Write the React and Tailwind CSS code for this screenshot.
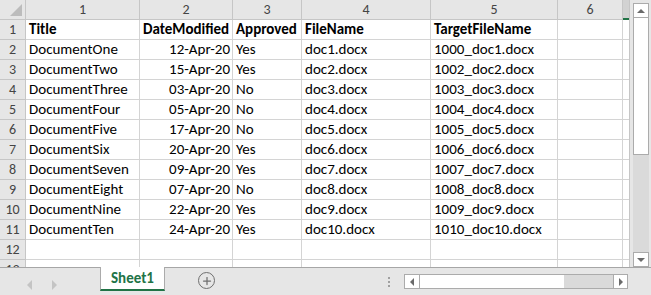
import { Plus } from 'lucide-react'

const COLS = [114, 93, 69, 129, 127, 65]

const ROWS = [
  ['Title', 'DateModified', 'Approved', 'FileName', 'TargetFileName', ''],
  ['DocumentOne', '12-Apr-20', 'Yes', 'doc1.docx', '1000_doc1.docx', ''],
  ['DocumentTwo', '15-Apr-20', 'Yes', 'doc2.docx', '1002_doc2.docx', ''],
  ['DocumentThree', '03-Apr-20', 'No', 'doc3.docx', '1003_doc3.docx', ''],
  ['DocumentFour', '05-Apr-20', 'No', 'doc4.docx', '1004_doc4.docx', ''],
  ['DocumentFive', '17-Apr-20', 'No', 'doc5.docx', '1005_doc5.docx', ''],
  ['DocumentSix', '20-Apr-20', 'Yes', 'doc6.docx', '1006_doc6.docx', ''],
  ['DocumentSeven', '09-Apr-20', 'Yes', 'doc7.docx', '1007_doc7.docx', ''],
  ['DocumentEight', '07-Apr-20', 'No', 'doc8.docx', '1008_doc8.docx', ''],
  ['DocumentNine', '22-Apr-20', 'Yes', 'doc9.docx', '1009_doc9.docx', ''],
  ['DocumentTen', '24-Apr-20', 'Yes', 'doc10.docx', '1010_doc10.docx', ''],
  ['', '', '', '', '', ''],
  ['', '', '', '', '', ''],
]

const font = { fontFamily: 'Carlito, Lato, "Open Sans", sans-serif' }

function HeaderRow() {
  return (
    <div className="flex h-[20px] shrink-0 bg-[#e6e6e6] text-[14px] text-[#444]">
      <div className="relative w-[26px] shrink-0 border-r border-b border-[#c6c6c6]">
        <div className="absolute right-[3px] bottom-[3px] w-0 h-0 border-l-[12px] border-l-transparent border-b-[12px] border-b-[#bcbcbc]" />
      </div>
      {COLS.map((w, i) => (
        <div key={i} style={{ width: w }} className="shrink-0 flex items-center justify-center border-r border-b border-[#c6c6c6]">
          {i + 1}
        </div>
      ))}
      <div className="flex-1 bg-[#d2d2d2] border-b-2 border-[#217346]" />
    </div>
  )
}

function DataRow({ cells, n }) {
  const bold = n === 1
  return (
    <div className="flex h-[20px] shrink-0">
      <div className="w-[26px] shrink-0 flex items-center justify-center bg-[#e6e6e6] text-[14px] text-[#444] border-r border-b border-[#c6c6c6]">
        {n}
      </div>
      {cells.map((c, i) => (
        <div key={i} style={{ width: COLS[i] }}
          className={`shrink-0 flex items-center whitespace-nowrap overflow-hidden border-r border-b border-[#d4d4d4] text-[15px] text-black ${bold ? 'font-bold' : ''} ${i === 1 && !bold ? 'justify-end pr-[2px]' : 'pl-[3px]'}`}>
          {c}
        </div>
      ))}
      <div className="flex-1 border-b border-[#d4d4d4]" />
    </div>
  )
}

function VScroll() {
  return (
    <div className="w-[22px] shrink-0 bg-[#e6e6e6] border-l border-[#c6c6c6] flex flex-col pl-[3px] pr-[2px] pt-[3px]">
      <div className="h-[15px] bg-white border border-[#ababab] flex items-center justify-center">
        <div className="w-0 h-0 border-x-[4px] border-x-transparent border-b-[4px] border-b-[#6a6a6a]" />
      </div>
      <div className="h-[137px] bg-white border-x border-b border-[#ababab]" />
      <div className="flex-1 bg-[#dadada]" />
      <div className="h-[15px] bg-white border border-[#ababab] flex items-center justify-center">
        <div className="w-0 h-0 border-x-[4px] border-x-transparent border-t-[4px] border-t-[#6a6a6a]" />
      </div>
    </div>
  )
}

function TabBar() {
  return (
    <div className="h-[28px] shrink-0 bg-[#e6e6e6] border-t border-[#a6a6a6] flex items-start">
      <div className="flex items-center gap-[20px] pl-[27px] pt-[7px] h-[26px]">
        <div className="w-0 h-0 border-y-[5px] border-y-transparent border-r-[5px] border-r-[#c4c4c4]" />
        <div className="w-0 h-0 border-y-[5px] border-y-transparent border-l-[5px] border-l-[#c4c4c4]" />
      </div>
      <div className="ml-[43px] -mt-px w-[65px] h-[24px] bg-white border-x border-[#ababab] border-b-2 border-b-[#217346] flex items-center justify-center text-[15px] font-bold text-[#217346]">
        Sheet1
      </div>
      <div className="ml-[33px] mt-[4px] w-[17px] h-[17px] rounded-full border-[1.5px] border-[#6f6f6f] flex items-center justify-center">
        <Plus size={12} strokeWidth={2.5} color="#6f6f6f" />
      </div>
      <div className="ml-[173px] mt-[9px] flex flex-col gap-[2px]">
        <div className="w-[2px] h-[2px] bg-[#a0a0a0]" />
        <div className="w-[2px] h-[2px] bg-[#a0a0a0]" />
        <div className="w-[2px] h-[2px] bg-[#a0a0a0]" />
      </div>
      <div className="ml-[14px] mt-[6px] flex h-[15px] border border-[#ababab]">
        <div className="w-[15px] bg-white border-r border-[#ababab] flex items-center justify-center">
          <div className="w-0 h-0 border-y-[4px] border-y-transparent border-r-[4px] border-r-[#6a6a6a]" />
        </div>
        <div className="w-[144px] bg-white" />
        <div className="w-[49px] bg-[#dadada]" />
        <div className="w-[14px] bg-white border-l border-[#ababab] flex items-center justify-center">
          <div className="w-0 h-0 border-y-[4px] border-y-transparent border-l-[4px] border-l-[#6a6a6a]" />
        </div>
      </div>
    </div>
  )
}

export default function App() {
  return (
    <div style={font} className="w-[651px] h-[295px] flex flex-col overflow-hidden bg-white">
      <div className="flex h-[267px] overflow-hidden">
        <div className="w-[629px] shrink-0 flex flex-col overflow-hidden">
          <HeaderRow />
          {ROWS.map((r, i) => <DataRow key={i} cells={r} n={i + 1} />)}
        </div>
        <VScroll />
      </div>
      <TabBar />
    </div>
  )
}
